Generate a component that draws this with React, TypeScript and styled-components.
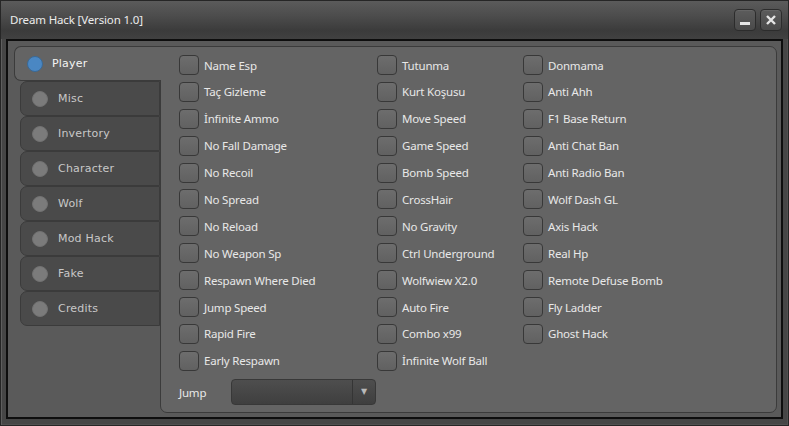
import styled, { createGlobalStyle } from 'styled-components';

const GlobalStyle = createGlobalStyle`
  html, body {
    margin: 0;
    padding: 0;
    background: #3d3d3d;
  }
`;

const Window = styled.div`
  width: 789px;
  height: 426px;
  box-sizing: border-box;
  border: 1px solid #262626;
  box-shadow: inset 1px 1px 0 #5e5e5e, inset -1px -1px 0 #505050;
  background: #464646;
  display: flex;
  flex-direction: column;
  font-family: "Noto Sans", "Open Sans", sans-serif;
`;

const TitleBar = styled.div`
  height: 38px;
  flex-shrink: 0;
  display: flex;
  align-items: center;
  justify-content: space-between;
  padding: 0 6px 0 9px;
  background: linear-gradient(#5b5b5b, #4c4c4c 40%, #3b3b3b 78%, #414141);
`;

const Title = styled.span`
  font-size: 11.5px;
  letter-spacing: -0.15px;
  color: #ececec;
  margin-top: -2px;
`;

const TitleButtons = styled.div`
  display: flex;
  gap: 4px;
  margin-top: -1px;
`;

const TitleButton = styled.button`
  width: 22px;
  height: 22px;
  padding: 0;
  display: flex;
  align-items: center;
  justify-content: center;
  border: 1px solid #2c2c2c;
  border-radius: 4px;
  background: linear-gradient(#5c5c5c, #4a4a4a);
  box-shadow: inset 0 1px 0 #666;
  cursor: pointer;
`;

const Frame = styled.div`
  flex: 1;
  margin: 0 5px 6px 5px;
  border: 2px solid #0e0e0e;
  background: #5a5a5a;
  display: flex;
  padding: 5px 4px 4px 6px;
`;

const TabList = styled.div`
  width: 146px;
  flex-shrink: 0;
  display: flex;
  flex-direction: column;
  position: relative;
  z-index: 1;
`;

const Tab = styled.div<{ $active?: boolean }>`
  height: 35px;
  box-sizing: border-box;
  margin-left: ${({ $active }) => ($active ? '0' : '6px')};
  display: flex;
  align-items: center;
  gap: ${({ $active }) => ($active ? '9px' : '10px')};
  padding-left: ${({ $active }) => ($active ? '12px' : '11px')};
  background: ${({ $active }) => ($active ? '#646464' : '#4a4a4a')};
  border: 1px solid #3b3b3b;
  border-right: ${({ $active }) => ($active ? 'none' : '1px solid #3b3b3b')};
  border-radius: 7px 0 0 7px;
  margin-right: ${({ $active }) => ($active ? '-1px' : '0')};
  font-family: "DejaVu Sans", sans-serif;
  font-size: 11px;
  letter-spacing: 0.2px;
  color: ${({ $active }) => ($active ? '#f4f4f4' : '#c8c8c8')};
`;

const Dot = styled.span<{ $active?: boolean }>`
  width: 16px;
  height: 16px;
  border-radius: 50%;
  box-sizing: border-box;
  background: ${({ $active }) => ($active ? '#4a87c3' : '#7b7b7b')};
  border: 1px solid ${({ $active }) => ($active ? '#3a6996' : '#717171')};
`;

const Panel = styled.div`
  flex: 1;
  background: #646464;
  border: 1px solid #3b3b3b;
  border-radius: 0 7px 7px 7px;
  padding: 8px 0 0 18px;
  display: flex;
  flex-direction: column;
`;

const OptionGrid = styled.div`
  display: grid;
  grid-template-columns: 198px 146px auto;
  grid-template-rows: repeat(12, 20px);
  grid-auto-flow: column;
  row-gap: 6.9px;
`;

const Option = styled.label`
  display: flex;
  align-items: center;
  gap: 5px;
  font-size: 11.5px;
  letter-spacing: -0.2px;
  color: #e8e8e8;
  white-space: nowrap;
`;

const Box = styled.span`
  width: 20px;
  height: 20px;
  box-sizing: border-box;
  border: 1px solid #383838;
  border-radius: 4px;
  background: linear-gradient(#6d6d6d, #616161);
  flex-shrink: 0;
`;

const JumpRow = styled.div`
  display: flex;
  align-items: center;
  margin-top: 8px;
`;

const JumpLabel = styled.span`
  width: 52px;
  font-size: 11.5px;
  letter-spacing: -0.2px;
  color: #e8e8e8;
  margin-top: 2px;
`;

const Combo = styled.div`
  width: 145px;
  height: 26px;
  box-sizing: border-box;
  border: 1px solid #383838;
  border-radius: 4px;
  background: linear-gradient(#4e4e4e, #3f3f3f);
  display: flex;
  justify-content: flex-end;
`;

const ComboArrow = styled.span`
  width: 22px;
  border-left: 1px solid #353535;
  display: flex;
  align-items: center;
  justify-content: center;
  color: #b8b8b8;
  font-size: 8px;
  font-family: "DejaVu Sans", sans-serif;
`;

const tabs = ['Player', 'Misc', 'Invertory', 'Character', 'Wolf', 'Mod Hack', 'Fake', 'Credits'];

const options = [
  'Name Esp', 'Taç Gizleme', 'İnfinite Ammo', 'No Fall Damage', 'No Recoil', 'No Spread',
  'No Reload', 'No Weapon Sp', 'Respawn Where Died', 'Jump Speed', 'Rapid Fire', 'Early Respawn',
  'Tutunma', 'Kurt Koşusu', 'Move Speed', 'Game Speed', 'Bomb Speed', 'CrossHair',
  'No Gravity', 'Ctrl Underground', 'Wolfwiew X2.0', 'Auto Fire', 'Combo x99', 'İnfinite Wolf Ball',
  'Donmama', 'Anti Ahh', 'F1 Base Return', 'Anti Chat Ban', 'Anti Radio Ban', 'Wolf Dash GL',
  'Axis Hack', 'Real Hp', 'Remote Defuse Bomb', 'Fly Ladder', 'Ghost Hack',
];

export default function App() {
  return (
    <>
      <GlobalStyle />
      <Window>
        <TitleBar>
          <Title>Dream Hack [Version 1.0]</Title>
          <TitleButtons>
            <TitleButton aria-label="minimize">
              <svg width="12" height="12" viewBox="0 0 12 12">
                <rect x="1" y="8" width="10" height="3" fill="#e6e6e6" />
              </svg>
            </TitleButton>
            <TitleButton aria-label="close">
              <svg width="12" height="12" viewBox="0 0 12 12">
                <path d="M2 2 L10 10 M10 2 L2 10" stroke="#e6e6e6" strokeWidth="2.4" />
              </svg>
            </TitleButton>
          </TitleButtons>
        </TitleBar>
        <Frame>
          <TabList>
            {tabs.map((t, i) => (
              <Tab key={t} $active={i === 0}>
                <Dot $active={i === 0} />
                {t}
              </Tab>
            ))}
          </TabList>
          <Panel>
            <OptionGrid>
              {options.map((o) => (
                <Option key={o}>
                  <Box />
                  {o}
                </Option>
              ))}
            </OptionGrid>
            <JumpRow>
              <JumpLabel>Jump</JumpLabel>
              <Combo>
                <ComboArrow>▼</ComboArrow>
              </Combo>
            </JumpRow>
          </Panel>
        </Frame>
      </Window>
    </>
  );
}
